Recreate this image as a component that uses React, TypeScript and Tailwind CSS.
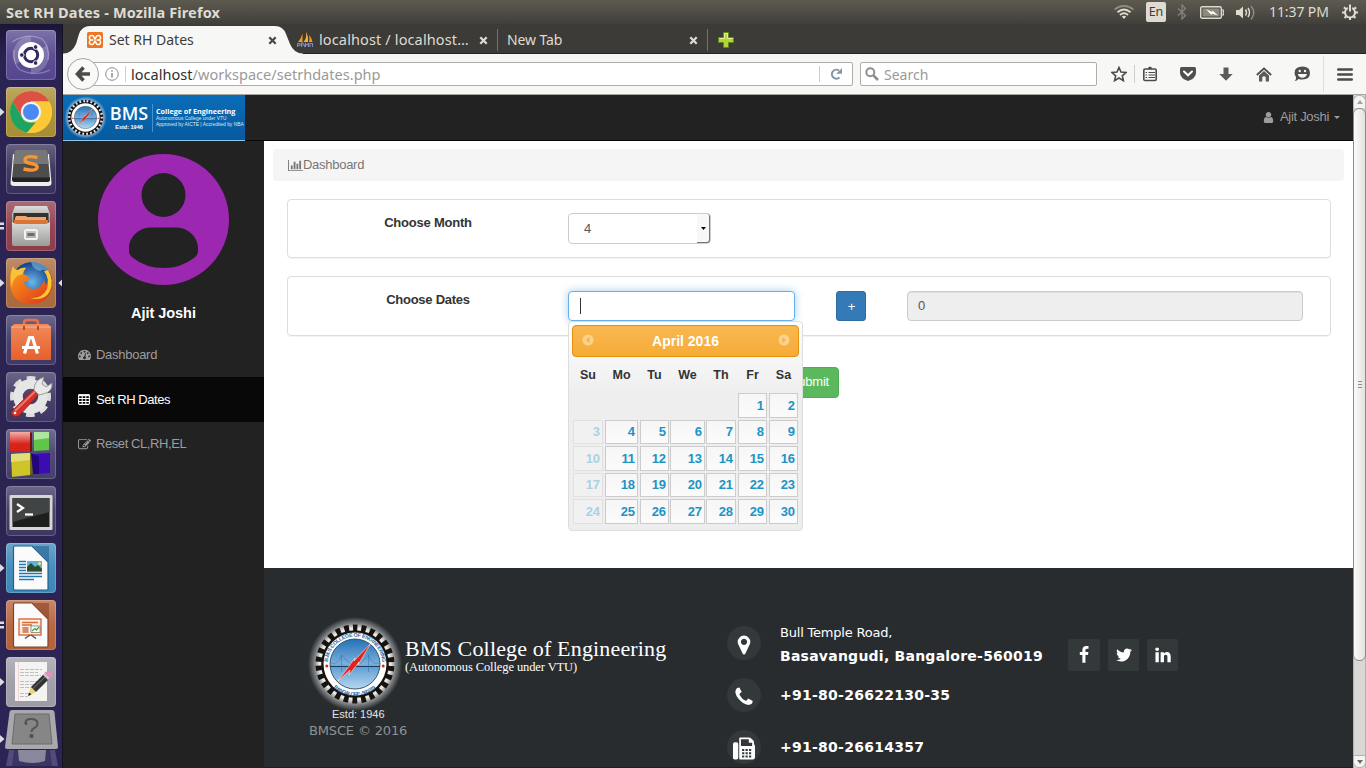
import React from "react";

const ubuntu = "font-['Noto_Sans',sans-serif]";
const arial = "font-['Liberation_Sans',sans-serif]";
const dejavu = "font-['DejaVu_Sans',sans-serif]";

/* ---------- shared drawings ---------- */

function Glyph({ d, className, box = "0 0 1792 1792" }: { d: string; className?: string; box?: string }) {
  return (
    <svg viewBox={box} className={className} fill="currentColor" fillRule="evenodd">
      <path d={d} />
    </svg>
  );
}

const MARKER =
  "M1152 640q0-106-75-181t-181-75-181 75-75 181 75 181 181 75 181-75 75-181zm256 0q0 109-33 179l-364 774q-16 33-47.5 52t-67.5 19-67.5-19-46.5-52l-365-774q-33-70-33-179 0-212 150-362t362-150 362 150 150 362z";
const PHONE =
  "M1600 1240q0 27-10 70.5t-21 68.5q-21 50-122 106-94 51-186 51-27 0-53-3.5t-57.5-12.5-47-14.5-55.5-20.5-49-18q-98-35-175-83-127-79-264-216t-216-264q-48-77-83-175-3-9-18-49t-20.5-55.5-14.5-47-12.5-57.5-3.5-53q0-92 51-186 56-101 106-122 25-11 68.5-21t70.5-10q14 0 21 3 18 6 53 76 11 19 30 54t35 63.5 31 53.5q3 4 17.5 25t21.5 35.5 7 28.5q0 20-28.5 50t-62 55-62 53-28.5 46q0 9 5 22.5t8.5 20.5 14 24 11.5 19q76 137 174 235t235 174q2 1 19 11.5t24 14 20.5 8.5 22.5 5q18 0 46-28.5t53-62 55-62 50-28.5q14 0 28.5 7t35.5 21.5 25 17.5q25 15 53.5 31t63.5 35 54 30q70 35 76 53 3 7 3 21z";
const FACEBOOK =
  "M1343 12v264h-157q-86 0-116 36t-30 108v189h293l-39 296h-254v759h-306v-759h-255v-296h255v-218q0-186 104-288.5t277-102.5q147 0 228 12z";
const TWITTER =
  "M1684 408q-67 98-162 167 1 14 1 42 0 130-38 259.5t-115.5 248.5-184.5 210.5-258 146-323 54.5q-271 0-496-145 35 4 78 4 225 0 401-138-105-2-188-64.5t-114-159.5q33 5 61 5 43 0 85-11-112-23-185.5-111.5t-73.5-205.5v-4q68 38 146 41-66-44-105-115t-39-154q0-88 44-163 121 149 294.5 238.5t371.5 99.5q-8-38-8-74 0-134 94.5-228.5t228.5-94.5q140 0 236 102 109-21 205-78-37 115-142 178 93-10 186-50z";
const LINKEDIN =
  "M477 625v991h-330v-991h330zm21-306q1 73-50.5 122t-135.5 49h-2q-82 0-132-49t-50-122q0-74 51.5-122.5t134.5-48.5 133 48.5 51 122.5zm1166 729v568h-329v-530q0-105-40.5-164.5t-126.5-59.5q-63 0-105.5 34.5t-63.5 85.5q-11 30-11 81v553h-329q2-399 2-647t-1-296l-1-48h329v144h-2q20-32 41-56t56.5-52 87-43.5 114.5-15.5q171 0 275 113.5t104 332.5z";
const USER =
  "M1536 1399q0 109-62.5 187t-150.5 78h-854q-88 0-150.5-78t-62.5-187q0-85 8.5-160.5t31.5-152 58.5-131 94-89 134.5-34.5q131 128 313 128t313-128q76 0 134.5 34.5t94 89 58.5 131 31.5 152 8.5 160.5zm-256-887q0 159-112.5 271.5t-271.5 112.5-271.5-112.5-112.5-271.5 112.5-271.5 271.5-112.5 271.5 112.5 112.5 271.5z";
const BARS =
  "M640 896v512h-256v-512h256zm384-512v1024h-256v-1024h256zm1024 1152v128h-2048v-1536h128v1408h1920zm-640-896v768h-256v-768h256zm384-384v1152h-256v-1152h256z";
const GAUGE =
  "M384 1152q0-53-37.5-90.5t-90.5-37.5-90.5 37.5-37.5 90.5 37.5 90.5 90.5 37.5 90.5-37.5 37.5-90.5zm192-448q0-53-37.5-90.5t-90.5-37.5-90.5 37.5-37.5 90.5 37.5 90.5 90.5 37.5 90.5-37.5 37.5-90.5zm428 481l101-382q6-26-7.5-48.5t-38.5-29.5-48 6.5-30 39.5l-101 382q-60 5-107 43.5t-63 98.5q-20 77 20 146t117 89 146-20 89-117q16-60-6-117t-72-91zm660-33q0-53-37.5-90.5t-90.5-37.5-90.5 37.5-37.5 90.5 37.5 90.5 90.5 37.5 90.5-37.5 37.5-90.5zm-640-640q0-53-37.5-90.5t-90.5-37.5-90.5 37.5-37.5 90.5 37.5 90.5 90.5 37.5 90.5-37.5 37.5-90.5zm448 192q0-53-37.5-90.5t-90.5-37.5-90.5 37.5-37.5 90.5 37.5 90.5 90.5 37.5 90.5-37.5 37.5-90.5zm320 448q0 261-141 483-19 29-54 29h-1402q-35 0-54-29-141-221-141-483 0-182 71-348t191-286 286-191 348-71 348 71 286 191 191 286 71 348z";
const EDIT =
  "M888 1184l116-116-152-152-116 116v56h96v96h56zm440-720q-16-16-33 1l-350 350q-17 17-1 33t33-1l350-350q17-17 1-33zm80 594v190q0 119-84.5 203.5t-203.5 84.5h-832q-119 0-203.5-84.5t-84.5-203.5v-832q0-119 84.5-203.5t203.5-84.5h832q63 0 117 25 15 7 18 23 3 17-9 29l-49 49q-14 14-32 8-23-6-45-6h-832q-66 0-113 47t-47 113v832q0 66 47 113t113 47h832q66 0 113-47t47-113v-126q0-13 9-22l64-64q15-15 35-7t20 29zm-96-738l288 288-672 672h-288v-288zm444 132l-92 92-288-288 92-92q28-28 68-28t68 28l152 152q28 28 28 68t-28 68z";

function Emblem({ className, id, tagged }: { className: string; id: string; tagged?: boolean }) {
  return (
    <svg viewBox="-50 -50 100 100" className={className}>
      <defs>
        <radialGradient id={id + "g"}>
          <stop offset="0.76" stopColor="#fff" stopOpacity="0.9" />
          <stop offset="0.86" stopColor="#fff" stopOpacity="0.42" />
          <stop offset="1" stopColor="#fff" stopOpacity="0" />
        </radialGradient>
        <linearGradient id={id + "s"} x1="0" y1="0" x2="0" y2="1">
          <stop offset="0" stopColor="#2272b4" />
          <stop offset="0.5" stopColor="#7bb0dd" />
          <stop offset="0.56" stopColor="#5f9fd4" />
          <stop offset="1" stopColor="#b7d8f0" />
        </linearGradient>
        <path id={id + "t"} d="M-27 4A27.300 27.300 0 1 1 27 4" />
        <path id={id + "b"} d="M-26.500 17.500A31.500 31.500 0 0 0 26.500 17.500" />
      </defs>
      <circle r="47" fill={`url(#${id}g)`} />
      <circle r="36" fill="none" stroke="#17130f" strokeWidth="7" strokeDasharray="4.800 3.900" strokeDashoffset="2.400" transform="rotate(-90)" />
      <circle r="33.800" fill="#17130f" />
      <circle r="31.500" fill="#fff" />
      <circle r="25" fill={`url(#${id}s)`} stroke="#30485a" strokeWidth="0.900" />
      <path d="M-25 2.500H25" stroke="#1d3c5c" strokeWidth="1.100" />
      <path d="M-24 -1Q-17 2 -13.500 -9Q-4 2 0 1.500Q4 2 13.500 -9Q17 2 24 -1M-13.500 -9V8M13.500 -9V8" stroke="#2c6aa3" strokeWidth="0.700" fill="none" opacity="0.600" />
      <path d="M16 -21L-1 -3L0 -6L-17 17L-5 6L-6 11L4 -2L3 1Z" fill="#e2231a" stroke="#fff" strokeWidth="0.500" />
      <circle cx="-28.200" cy="2" r="1.500" fill="#e2231a" />
      <circle cx="28.200" cy="2" r="1.500" fill="#e2231a" />
      {tagged && (
        <g className={arial} fontSize="5.400" fontWeight="700" fill="#1f6ca8">
          <text textLength="82">
            <textPath href={`#${id}t`} startOffset="6">B.M.S COLLEGE OF ENGINEERING</textPath>
          </text>
          <text textLength="46">
            <textPath href={`#${id}b`} startOffset="8">BANGALORE - 560 019</textPath>
          </text>
        </g>
      )}
    </svg>
  );
}

/* ---------- desktop panel ---------- */

function TopPanel() {
  return (
    <header className={`flex h-6 shrink-0 items-center bg-linear-to-b from-[#5d5b50] to-[#413f3a] pl-1.5 text-[#dfdbd2] ${ubuntu}`}>
      <span className="-mt-px text-[14.5px] leading-6 font-bold tracking-[0.14px]">Set RH Dates - Mozilla Firefox</span>
      <div className="ml-auto flex items-center">
        <svg viewBox="0 0 20 14" className="h-3.5 w-5" fill="none">
          <path d="M0.500 4.500Q10 -3 19.500 4.500" stroke="#8f8b82" strokeWidth="1.800" />
          <path d="M3.500 7.300Q10 1.800 16.500 7.300M6 10Q10 6.500 14 10" stroke="#dfdbd2" strokeWidth="1.800" />
          <path d="M7.800 11.500Q10 9.800 12.200 11.500L10 14Z" fill="#dfdbd2" />
        </svg>
        <span className="ml-3 flex h-5 w-5 items-center justify-center rounded-[2px] bg-[#dfdbd2] text-[12.5px] text-[#3c3b37]">En</span>
        <svg viewBox="0 0 10 16" className="ml-[11px] h-4 w-2.5" fill="none" stroke="#85827a" strokeWidth="1.300">
          <path d="M1 4.500L8.500 11.500L5 15V1L8.500 4.500L1 11.500" />
        </svg>
        <svg viewBox="0 0 24 13" className="ml-[13px] h-[13px] w-6">
          <rect x="0.700" y="0.700" width="20.600" height="11.600" rx="1.500" fill="none" stroke="#dfdbd2" strokeWidth="1.400" />
          <rect x="2.500" y="2.500" width="17" height="8" fill="#8c897f" />
          <path d="M22 4h1.300v5H22" fill="none" stroke="#dfdbd2" strokeWidth="1.200" />
          <path d="M6 3.200L12.500 6L12.200 4.200L18 9.500L11.500 7.500L11.700 9.300Z" fill="#fff" />
        </svg>
        <svg viewBox="0 0 20 17" className="ml-3 h-[17px] w-5" fill="none">
          <path d="M0 6h3l4-3.500v12L3 11H0z" fill="#dfdbd2" />
          <path d="M9.500 5.500Q11.500 8.500 9.500 11.500M12 4Q15 8.500 12 13" stroke="#dfdbd2" strokeWidth="1.500" />
          <path d="M15 2Q20.500 8.500 15 15.500" stroke="#8f8b82" strokeWidth="1.500" />
        </svg>
        <span className="ml-[13px] w-[61px] text-[14px] leading-6 tracking-[-0.1px] whitespace-nowrap">11:37 PM</span>
        <svg viewBox="0 0 16 16" className="mr-2 ml-3 h-4 w-4" fill="none" stroke="#dfdbd2">
          <path d="M5.800 4A5 5 0 1 0 10.200 4" strokeWidth="2" />
          <path d="M8 0.500v7" strokeWidth="2" />
          <path d="M0 8.500h3M13 8.500h3M8 13v3M1.800 3.300l2.200 1.500M14.200 3.300l-2.200 1.500M2.500 14l2-2M13.500 14l-2-2" strokeWidth="2" />
        </svg>
      </div>
    </header>
  );
}

/* ---------- launcher ---------- */

function Tile({ fill, children }: { fill: string; children?: React.ReactNode }) {
  return (
    <svg viewBox="0 0 50 50" className="h-[50px] w-[50px] shrink-0">
      <rect width="50" height="50" rx="4" fill={fill} />
      <rect width="50" height="50" rx="4" fill="url(#tileShine)" />
      <rect x="0.500" y="0.500" width="49" height="49" rx="3.500" fill="none" stroke="#fff" strokeOpacity="0.200" />
      {children}
    </svg>
  );
}

function LauncherDefs() {
  return (
    <svg className="absolute h-0 w-0">
      <defs>
        <linearGradient id="tileShine" x1="0" y1="0" x2="0" y2="1">
          <stop offset="0" stopColor="#fff" stopOpacity="0.240" />
          <stop offset="0.500" stopColor="#fff" stopOpacity="0.050" />
          <stop offset="1" stopColor="#fff" stopOpacity="0" />
        </linearGradient>
        <linearGradient id="metal" x1="0" y1="0" x2="0" y2="1">
          <stop offset="0" stopColor="#dededc" />
          <stop offset="1" stopColor="#9b9b99" />
        </linearGradient>
        <linearGradient id="orangeBag" x1="0" y1="0" x2="0" y2="1">
          <stop offset="0" stopColor="#f08a5c" />
          <stop offset="1" stopColor="#e8602a" />
        </linearGradient>
        <linearGradient id="fox" x1="0" y1="0" x2="1" y2="1">
          <stop offset="0" stopColor="#f9a51b" />
          <stop offset="0.500" stopColor="#ee6a1c" />
          <stop offset="1" stopColor="#d5311b" />
        </linearGradient>
        <linearGradient id="redCube" x1="0" y1="0" x2="0" y2="1">
          <stop offset="0" stopColor="#f6b0a6" />
          <stop offset="0.600" stopColor="#d8231b" />
        </linearGradient>
        <radialGradient id="globe">
          <stop offset="0" stopColor="#6ab7ea" />
          <stop offset="1" stopColor="#143f86" />
        </radialGradient>
      </defs>
    </svg>
  );
}

const DashIcon = () => (
  <Tile fill="#55468f">
    <g fill="none" stroke="#fff">
      <path d="M12 33A16 16 0 0 1 25 9M38 17A16 16 0 0 1 25 41" strokeOpacity="0.200" strokeWidth="6" />
      <path d="M6 12Q22 2 36 9Q44 16 42 30M44 40Q30 47 14 40Q7 34 8 20" strokeOpacity="0.300" strokeWidth="1.200" />
    </g>
    <circle cx="25" cy="25" r="13" fill="#fff" />
    <circle cx="25" cy="25" r="6.700" fill="none" stroke="#33285f" strokeWidth="3" />
    <circle cx="15.800" cy="25" r="2.300" fill="#33285f" stroke="#fff" strokeWidth="0.900" />
    <circle cx="29.600" cy="17" r="2.300" fill="#33285f" stroke="#fff" strokeWidth="0.900" />
    <circle cx="29.600" cy="33" r="2.300" fill="#33285f" stroke="#fff" strokeWidth="0.900" />
  </Tile>
);

const ChromeIcon = () => (
  <Tile fill="#a88d33">
    <circle cx="25" cy="25" r="21" fill="#fcc934" />
    <path d="M6.800 14.500A21 21 0 0 1 43.200 14.500H25L15.900 30.200Z" fill="#dd5144" />
    <path d="M6.800 14.500L15.900 30.200Q19 36 25 35.500H31L21 45.700A21 21 0 0 1 6.800 14.500Z" fill="#1da462" />
    <path d="M34.100 30.200L21 45.700A21 21 0 0 0 43.200 14.500H25Z" fill="#fcc934" />
    <circle cx="25" cy="25" r="10.200" fill="#f4f4f4" />
    <circle cx="25" cy="25" r="8" fill="#4a89f0" />
  </Tile>
);

const SublimeIcon = () => (
  <Tile fill="#37315a">
    <path d="M7 10L4.500 39Q4.500 42 8 42H42Q45.500 42 45.500 39L43 10Z" fill="#ededed" />
    <path d="M8.500 8Q8.500 6 10.500 6H39.500Q41.500 6 41.500 8L44 35Q44 38 41 38H9Q6 38 6 35Z" fill="#4d4d4d" />
    <path d="M8.500 8Q8.500 6 10.500 6H39.500Q41.500 6 41.500 8L42.500 20H7.500Z" fill="#777" />
    <path d="M6 33.500H44V35Q44 38 41 38H9Q6 38 6 35Z" fill="#222" />
    <path d="M31.500 13.500Q20 11 19 15.500Q18.500 18.500 25 19.500Q32 20.500 31 24Q29 27.500 17.500 25" fill="none" stroke="#f79433" strokeWidth="3.400" />
  </Tile>
);

const FilesIcon = () => (
  <Tile fill="#8f3c4a">
    <path d="M9 5H41L44 13V20H6V13Z" fill="url(#metal)" />
    <path d="M7.500 12H42.500V22H7.500Z" fill="#34302c" />
    <path d="M9 17L10 15H20L21 16H40V22H9Z" fill="#f3a36b" />
    <path d="M8 19H42V23H8Z" fill="#d97535" />
    <path d="M6 20Q8 23 10 23H40Q42 23 44 20V43Q44 45 42 45H8Q6 45 6 43Z" fill="url(#metal)" />
    <rect x="19" y="29" width="12" height="9" rx="1.500" fill="none" stroke="#f3f3f3" strokeWidth="2" />
    <rect x="21.500" y="32" width="7" height="3" fill="#6d6d6d" />
  </Tile>
);

const FirefoxIcon = () => (
  <Tile fill="#a96a3c">
    <circle cx="26" cy="24" r="20" fill="url(#globe)" />
    <path d="M25 4Q38 3 43 14Q38 10 34 13Q27 12 25 4Z" fill="#8fd0f0" opacity="0.500" />
    <path d="M7 8Q8 12 12 12Q16 9 20 10Q17 13 17 16Q21 17 24 20Q22 23 18 24Q20 32 29 31Q36 29 38 22Q40 26 39 28Q44 21 42 12Q48 22 46 31Q41 46 25 46Q6 45 4 27Q3 15 7 8Z" fill="url(#fox)" />
    <path d="M38 13Q44 21 41 31Q36 41 24 40Q38 44 44 33Q48 22 42 12Z" fill="#fbc62f" />
    <path d="M7 8Q8 12 12 12Q16 9 20 10Q17 13 17 16L11 18Q5 24 6 31Q3 19 7 8Z" fill="#f9c23c" />
  </Tile>
);

const SoftwareIcon = () => (
  <Tile fill="#3f3965">
    <path d="M18 14V8Q18 5 21 5H29Q32 5 32 8V14" fill="none" stroke="#e9714a" strokeWidth="2.600" />
    <path d="M5 12L8 9H42L45 12V45H5Z" fill="url(#orangeBag)" />
    <path d="M5 12H45" stroke="#f8b293" strokeWidth="1.200" />
    <path d="M18 15V11M32 15V11" stroke="#b74b20" strokeWidth="2" />
    <g fill="none" stroke="#fff" strokeWidth="3.200">
      <path d="M18.500 38.500L23.500 22.500H26.500L31.500 38.500" />
      <path d="M16 32.500H34" strokeWidth="3" />
    </g>
  </Tile>
);

const SettingsIcon = () => (
  <Tile fill="#3d3763">
    <g transform="translate(24.500 24.500)">
      <circle r="17" fill="none" stroke="#dedede" strokeWidth="7" strokeDasharray="8 5.350" strokeDashoffset="4" />
      <circle r="12.500" fill="none" stroke="#e6e6e6" strokeWidth="9.500" />
    </g>
    <path d="M6 39L28 17L33 22L13 44Q9 46 6 43Q4 41 6 39Z" fill="#d3302a" stroke="#8f1613" strokeWidth="0.600" />
    <path d="M9 39L29 19.500" stroke="#f0776f" strokeWidth="1.800" />
    <path d="M28 18Q28 8 38 5L36 12L40 15L46 11Q47 20 37 22L33 23Z" fill="#e9e9e9" stroke="#8d8d8d" strokeWidth="0.800" />
    <circle cx="9" cy="41" r="1.300" fill="#fff" />
  </Tile>
);

const BlocksIcon = () => (
  <Tile fill="#45406b">
    <path d="M4 3H24V23L4 22Z" fill="url(#redCube)" />
    <path d="M24 3L26 4V22L24 23Z" fill="#6e120e" />
    <path d="M28 3H43V21L28 22Z" fill="#5fc64a" />
    <path d="M28 3H43V9L28 11Z" fill="#aee69f" />
    <path d="M5 25L24 24V46L6 48Z" fill="#cfc52a" />
    <path d="M5 25L24 24V31L5 33Z" fill="#e4dd77" />
    <path d="M24 24L27 26V44L24 46Z" fill="#6f6a12" />
    <path d="M27 25L44 24V44L27 45Z" fill="#3a0db4" />
    <path d="M25 24L33 28V45L27 45Z" fill="#23077a" />
  </Tile>
);

const TerminalIcon = () => (
  <Tile fill="#3d3763">
    <rect x="3.500" y="9" width="43" height="35" rx="1" fill="#d6d6d3" />
    <rect x="6.500" y="12" width="37" height="29" fill="#1d1f1f" />
    <path d="M6.500 12H43.500V26L6.500 36Z" fill="#404444" />
    <g fill="none" stroke="#fff" strokeWidth="2.200">
      <path d="M11 18L17 22L11 26" />
      <path d="M19 28.500H27" />
    </g>
  </Tile>
);

function Doc({ fill, fold, children }: { fill: string; fold: string; children: React.ReactNode }) {
  return (
    <Tile fill={fill}>
      <path d="M27 3H43V19Z" fill={fold} opacity="0.600" />
      <path d="M9 3H26L42 19V46Q42 47 41 47H9Q7.500 47 7.500 46V4.500Q7.500 3 9 3Z" fill="#fbfbfb" stroke={fold} strokeWidth="1.200" />
      {children}
    </Tile>
  );
}

const WriterIcon = () => (
  <Doc fill="#3d88b8" fold="#23628f">
    <path d="M13 18.500H20M13 21.500H20M13 24.500H20M13 27.500H20M13 30.500H36M13 33.500H36M13 36.500H28" stroke="#2279b0" strokeWidth="1.500" />
    <rect x="21" y="18" width="15" height="10.500" fill="#57b3e2" />
    <path d="M21 28.500V24L25 20L29 24L32 22L36 26V28.500Z" fill="#2d4a2b" />
    <circle cx="33.500" cy="20.500" r="1.500" fill="#f7e24a" />
  </Doc>
);

const ImpressIcon = () => (
  <Doc fill="#b4623a" fold="#8a4020">
    <rect x="13" y="19" width="22" height="16" fill="#fdeee6" stroke="#d96b38" strokeWidth="1.400" />
    <path d="M16 22.500H32M16 25H26" stroke="#d96b38" strokeWidth="1.400" />
    <path d="M16.500 28H22.500M16.500 30H22.500M16.500 32H22.500" stroke="#c56a45" strokeWidth="1.300" />
    <rect x="25" y="26" width="9" height="6.500" fill="#fff" stroke="#6a6a6a" strokeWidth="0.700" />
    <path d="M26 31L29 28.500L30.500 30L33 27" stroke="#3c9b3c" strokeWidth="1.200" fill="none" />
    <path d="M24 35L19 38.500M25 35L30 38.500" stroke="#555" strokeWidth="1.500" />
  </Doc>
);

const GeditIcon = () => (
  <Tile fill="#9e9ba6">
    <path d="M9 5H41V44H9Z" fill="#f3f3f1" />
    <path d="M12.500 5V44" stroke="#f3cccc" strokeWidth="0.800" />
    <path d="M14 12.500H36M14 15.500H32M14 18.500H35M14 24.500H34M14 27.500H30M14 30.500H31M14 36.500H24M14 39.500H22" stroke="#c0c0c0" strokeWidth="1.200" strokeDasharray="4 1" />
    <path d="M22 39L25 30L30 35Z" fill="#efd36d" />
    <path d="M25 30L37.500 17.500L42.500 22.500L30 35Z" fill="#333" />
    <path d="M27 31.500L39.500 19.500" stroke="#777" strokeWidth="1" />
    <path d="M37 18L40 15.500L44.500 20L42 23Z" fill="#c9c9c9" />
    <path d="M40 16Q44 14 45 17Q45.500 19 44 20Z" fill="#e58fc0" stroke="#e58fc0" strokeWidth="2" />
    <path d="M22 39L23.200 35.500L25.500 37.500Z" fill="#222" />
  </Tile>
);

const FoldedIcon = () => (
  <svg viewBox="0 0 54 57" className="-ml-px h-[57px] w-[54px] shrink-0">
    <path d="M4 40L1 56H53L50 40Z" fill="#514c79" />
    <path d="M9 40L7 56H47L45 40Z" fill="#3b3661" />
    <path d="M13 40H41L40 51Q28 55 14 51Z" fill="#8a889c" />
    <path d="M7 0H47Q49 0 49.500 2L53 37Q53 39 51 39H2Q0 39 0 37L4.500 2Q5 0 7 0Z" fill="#a9a8ad" />
    <path d="M10 4H44L47 34H7Z" fill="#868686" stroke="#6b6b6b" />
    <path d="M20.500 13.500Q20 9 26 9Q32.500 9 32.500 13.500Q32.500 16.500 28.500 18.500Q26.500 19.500 26.500 22" fill="none" stroke="#555" strokeWidth="2" />
    <circle cx="21" cy="13.500" r="1.500" fill="#555" />
    <circle cx="26.500" cy="26" r="2.200" fill="#555" />
  </svg>
);

type Mark = "none" | "one" | "two";
const launcher: { icon: () => React.ReactElement; mark: Mark; focus?: boolean }[] = [
  { icon: DashIcon, mark: "none" },
  { icon: ChromeIcon, mark: "one" },
  { icon: SublimeIcon, mark: "none" },
  { icon: FilesIcon, mark: "two" },
  { icon: FirefoxIcon, mark: "one", focus: true },
  { icon: SoftwareIcon, mark: "none" },
  { icon: SettingsIcon, mark: "none" },
  { icon: BlocksIcon, mark: "none" },
  { icon: TerminalIcon, mark: "none" },
  { icon: WriterIcon, mark: "one" },
  { icon: ImpressIcon, mark: "two" },
  { icon: GeditIcon, mark: "one" },
];

function Pip({ mark }: { mark: Mark }) {
  return (
    <svg viewBox="0 0 6 12" className="h-3 w-1.5 shrink-0" fill="#dcdce2">
      {mark === "one" && <path d="M0 2L4.500 6L0 10Z" />}
      {mark === "two" && <path d="M0 2.500H4V5H0ZM0 7H4V9.500H0Z" />}
    </svg>
  );
}

function Launcher() {
  return (
    <nav className="flex w-[63px] shrink-0 flex-col gap-[7px] overflow-hidden border-r border-[#15131f] bg-linear-to-b from-[#1b1638] via-[#2b2453] via-5% to-[#2c2454] pt-1.5">
      <LauncherDefs />
      {launcher.map(({ icon: Icon, mark, focus }, i) => (
        <div key={i} className="flex shrink-0 items-center">
          <Pip mark={mark} />
          <Icon />
          {focus && (
            <svg viewBox="0 0 5 10" className="ml-0.5 h-2.5 w-1 shrink-0" fill="#dcdce2">
              <path d="M5 0.500L0.500 5L5 9.500Z" />
            </svg>
          )}
        </div>
      ))}
      <div className="-mt-1 flex shrink-0 items-center">
        <Pip mark="one" />
        <FoldedIcon />
      </div>
    </nav>
  );
}

/* ---------- browser chrome ---------- */

function Cross({ className, color }: { className: string; color: string }) {
  return (
    <svg viewBox="0 0 9 9" className={`h-[9px] w-[9px] shrink-0 ${className}`}>
      <path d="M1.300 1.300L7.700 7.700M7.700 1.300L1.300 7.700" stroke={color} strokeWidth="2.300" />
    </svg>
  );
}

function TabStrip() {
  return (
    <div className={`relative flex h-[30px] shrink-0 items-center bg-[#3c3b37] pt-0.5 text-[#dfdbd2] ${ubuntu}`}>
      <svg viewBox="0 0 1303 30" className="absolute inset-0 h-[30px] w-[1303px]">
        <path d="M0 29.500H1303" stroke="#26251f" />
        <path d="M0 30V29.500Q9 29.500 13 20L16 10Q19 2 27 2H212Q220 2 223 10L227 20Q231 29.500 240 29.500V30Z" fill="#f7f7f5" />
      </svg>
      <div className="relative flex w-[225px] items-center pl-6">
        <svg viewBox="0 0 16 16" className="h-4 w-4">
          <rect width="16" height="16" rx="1.500" fill="#ee7623" />
          <path d="M6.500 8H5A2.300 2.300 0 1 1 7 5.500L8 7L9 5.500A2.300 2.300 0 1 1 11 8A2.300 2.300 0 1 1 9 10.500L8 9L7 10.500A2.300 2.300 0 1 1 5 8M9.500 8H11" fill="none" stroke="#fff" strokeWidth="1.500" />
        </svg>
        <span className="-mt-px ml-1.5 text-[14px] whitespace-nowrap text-[#3c3c3c]">Set RH Dates</span>
        <Cross className="mr-[11px] ml-auto" color="#4a4a48" />
      </div>
      <div className="relative flex w-[210px] items-center pl-[9px]">
        <svg viewBox="0 0 16 16" className="h-4 w-4">
          <path d="M5.500 1.500V10H1Q4.500 6 5.500 1.500Z" fill="#f89c0e" />
          <path d="M9 0Q10 6 6.500 10H11Q11.500 4 9 0Z" fill="#f6ae3b" />
          <path d="M12 3Q13 7 12 10H15.500Q15 6 12 3Z" fill="#f89c0e" />
          <path d="M0.500 15V11.500H3V13.500H0.500M4.500 15V11H6V13H7.500V15M8.500 15V11.500L10 13L11.500 11.500V15M13 15V11.500H15.500V15" fill="none" stroke="#8587b8" strokeWidth="1.100" />
        </svg>
        <span className="-mt-px ml-1.5 text-[14.5px] tracking-[0.13px] whitespace-nowrap">localhost / localhost…</span>
        <Cross className="mr-2.5 ml-auto" color="#dfdbd2" />
      </div>
      <div className="relative -ml-px flex h-[22px] w-[211px] items-center border-x border-[#73716b] pl-[9px]">
        <span className="-mt-px text-[14px] tracking-[-0.1px] whitespace-nowrap">New Tab</span>
        <Cross className="mr-[9px] ml-auto" color="#dfdbd2" />
      </div>
      <svg viewBox="0 0 16 16" className="relative ml-2.5 h-4 w-4">
        <path d="M5.500 0.500H10.500V5.500H15.500V10.500H10.500V15.500H5.500V10.500H0.500V5.500H5.500Z" fill="#b4d338" stroke="#5d8a1c" />
        <path d="M1.500 6.500H6.500V1.500H9.500V6.500H14.500" fill="none" stroke="#e6f29a" />
      </svg>
    </div>
  );
}

function Toolbar() {
  return (
    <div className={`flex h-[41px] shrink-0 items-center border-b border-[#a9a7a2] bg-[#f7f7f5] text-[#8a8a88] ${ubuntu}`}>
      <div className="relative z-10 ml-1 flex h-8 w-8 shrink-0 items-center justify-center rounded-full border border-[#a5a5a1] bg-[#f9f9f8]">
        <svg viewBox="0 0 16 16" className="h-4 w-4">
          <path d="M8.500 1.500L2.500 8L8.500 14.500M3 8H15" fill="none" stroke="#4b4b49" strokeWidth="3.600" />
        </svg>
      </div>
      <div className="-ml-3 flex h-6 w-[766px] shrink-0 items-center rounded-[2px] border border-[#aeaea8] bg-white pl-[17px]">
        <svg viewBox="0 0 14 14" className="h-3.5 w-3.5" fill="none" stroke="#8a8a88">
          <circle cx="7" cy="7" r="6.300" />
          <path d="M7 6V10.500M7 3.300V4.800" strokeWidth="1.500" />
        </svg>
        <span className="ml-1.5 h-4 w-px bg-[#cfcfcb]" />
        <span className="ml-[5px] text-[14.5px] leading-5 tracking-[0.03px] whitespace-nowrap text-[#9a9a98]">
          <span className="text-[#2e2e2e]">localhost</span>/workspace/setrhdates.php
        </span>
        <span className="ml-auto h-4 w-px bg-[#cfcfcb]" />
        <svg viewBox="0 0 12 12" className="mr-2.5 ml-2.5 h-3 w-3">
          <path d="M9.500 9.500A4.500 4.500 0 1 1 9 2.500" fill="none" stroke="#8796a5" strokeWidth="2.100" />
          <path d="M12 0V5.800H6.200Z" fill="#8796a5" />
        </svg>
      </div>
      <div className="ml-[7px] flex h-6 w-[237px] shrink-0 items-center rounded-[2px] border border-[#aeaea8] bg-white pl-1">
        <svg viewBox="0 0 14 14" className="h-3.5 w-3.5" fill="none" stroke="#8f8f8d">
          <circle cx="5.300" cy="5.300" r="4" strokeWidth="2" />
          <path d="M8.500 8.500L13 13" strokeWidth="2.600" />
        </svg>
        <span className="mt-px ml-[5px] text-[14px] leading-5 text-[#9a9a98]">Search</span>
      </div>
      <svg viewBox="0 0 16 16" className="ml-3.5 h-4 w-4 shrink-0" fill="none" stroke="#4b4b49" strokeWidth="1.600">
        <path d="M8 1.500L10 6L15 6.500L11.300 9.800L12.400 14.600L8 12L3.600 14.600L4.700 9.800L1 6.500L6 6Z" />
      </svg>
      <span className="ml-[7px] h-[18px] w-px bg-[#cfcfcb]" />
      <svg viewBox="0 0 14 16" className="ml-2 h-4 w-3.5 shrink-0">
        <path d="M5 2Q7 -1 9 2V3H5Z" fill="#4b4b49" />
        <rect x="0.800" y="3" width="12.400" height="11.500" rx="1.300" fill="#f7f7f5" stroke="#4b4b49" strokeWidth="1.600" />
        <path d="M2.500 6.500H4M2.500 9H4M2.500 11.500H4M5.500 6.500H12M5.500 9H12M5.500 11.500H12" stroke="#4b4b49" strokeWidth="1.200" />
      </svg>
      <svg viewBox="0 0 16 14" className="ml-[23px] h-3.5 w-4 shrink-0">
        <path d="M1.500 0H14.500Q16 0 16 1.500V6Q16 11 8 14Q0 11 0 6V1.500Q0 0 1.500 0Z" fill="#4f4f4d" />
        <path d="M4 4.500L8 8.300L12 4.500" fill="none" stroke="#fff" strokeWidth="2" strokeLinecap="round" />
      </svg>
      <svg viewBox="0 0 14 14" className="ml-[23px] h-3.5 w-3.5 shrink-0">
        <path d="M4.500 0.500H9.500V7H13.700L7 13.700L0.300 7H4.500Z" fill="#5b5b59" />
      </svg>
      <svg viewBox="0 0 16 15" className="ml-[23px] h-[15px] w-4 shrink-0">
        <path d="M0.800 8L8 1.500L15.200 8" fill="none" stroke="#4b4b49" strokeWidth="1.700" />
        <path d="M3 8.500L8 4L13 8.500V14.500H9.700V10Q8 8.300 6.300 10V14.500H3Z" fill="#5b5b59" />
      </svg>
      <svg viewBox="0 0 16 16" className="ml-[22px] h-4 w-4 shrink-0">
        <path d="M8.500 0.500Q16 0.500 16 7T8.500 13.500Q6 13.500 4.500 13Q3 15 0.800 15Q2.500 13 2 11Q0.500 9 0.500 7Q0.500 0.500 8.500 0.500Z" fill="#4f4f4d" />
        <path d="M3.800 8H13Q12 11.800 8.400 11.800T3.800 8Z" fill="#f7f7f5" />
        <circle cx="5.700" cy="5" r="1.200" fill="#f7f7f5" />
        <circle cx="11" cy="5" r="1.200" fill="#f7f7f5" />
      </svg>
      <span className="ml-[13px] h-9 w-px bg-[#dededb]" />
      <svg viewBox="0 0 16 13" className="ml-[13px] h-[13px] w-4 shrink-0">
        <path d="M1.300 1.500H14.700M1.300 6.500H14.700M1.300 11.500H14.700" stroke="#4b4b49" strokeWidth="2.600" strokeLinecap="round" />
      </svg>
    </div>
  );
}

function Scrollbar() {
  return (
    <div className="flex w-[13px] shrink-0 flex-col items-center border-x border-[#b3b1ad] bg-[#dad8d5]">
      <div className="flex h-[13px] w-[13px] shrink-0 items-center justify-center rounded-t-md border border-b-0 border-[#b3b1ad] bg-[#f4f4f3]">
        <svg viewBox="0 0 6 4" className="h-1 w-1.5" fill="#a5a3a0">
          <path d="M3 0L6 4H0Z" />
        </svg>
      </div>
      <div className="flex h-[553px] w-[13px] shrink-0 flex-col items-center justify-center gap-[2px] rounded-md border border-[#8d8b87] bg-linear-to-r from-[#fbfbfa] to-[#e3e2e0]">
        <span className="h-px w-1 bg-[#8f8d89]" />
        <span className="h-px w-1 bg-[#8f8d89]" />
        <span className="h-px w-1 bg-[#8f8d89]" />
      </div>
      <div className="mt-auto flex h-[13px] w-[13px] shrink-0 items-center justify-center rounded-b-md border border-[#b3b1ad] bg-[#f4f4f3]">
        <svg viewBox="0 0 6 4" className="h-1 w-1.5" fill="#6f6d6a">
          <path d="M3 4L6 0H0Z" />
        </svg>
      </div>
    </div>
  );
}

/* ---------- page ---------- */

function Navbar() {
  return (
    <div className="flex h-[46px] shrink-0 border-b border-[#080808] bg-[#222]">
      <div className="-mb-px flex h-[46px] w-[182px] items-center border-b border-[#8cc4ea] bg-linear-to-b from-[#0a6db8] to-[#075a9f] text-white">
        <Emblem id="nav" className="h-[45px] w-[45px] shrink-0" />
        <div className="ml-0.5 flex w-[38px] flex-col items-center">
          <span className="font-['Open_Sans',sans-serif] text-[18px] leading-[18px] font-semibold">BMS</span>
          <span className="mt-[2px] font-['Liberation_Sans',sans-serif] text-[5.5px] leading-[7px] font-bold">Estd: 1946</span>
        </div>
        <span className="ml-[4px] h-7 w-px bg-[#4b91c9]" />
        <div className="ml-[3px] flex flex-col whitespace-nowrap">
          <span className="font-['Open_Sans',sans-serif] text-[7.2px] leading-[8px] font-bold">College of Engineering</span>
          <span className="mt-px font-['Liberation_Sans',sans-serif] text-[4.9px] leading-[6px] text-[#dbeaf6]">Autonomous College under VTU</span>
          <span className="font-['Liberation_Sans',sans-serif] text-[4.9px] leading-[6px] text-[#dbeaf6]">Approved by AICTE | Accredited by NBA</span>
        </div>
      </div>
      <div className={`mr-[13px] ml-auto flex h-[44px] items-center text-[13px] text-[#9d9d9d] ${arial}`}>
        <Glyph d={USER} className="mr-[5px] h-[13px] w-[13px]" />
        <span className="tracking-[-0.3px]">Ajit Joshi</span>
        <svg viewBox="0 0 6 3" className="ml-[5px] h-[3px] w-1.5" fill="#9d9d9d">
          <path d="M0 0H6L3 3Z" />
        </svg>
      </div>
    </div>
  );
}

function Sidebar() {
  return (
    <aside className={`flex w-[201px] shrink-0 flex-col bg-[#222] text-[13px] text-[#9d9d9d] ${arial}`}>
      <svg viewBox="0 0 131 131" className="mt-[13px] ml-[35px] h-[131px] w-[131px]">
        <circle cx="65.500" cy="65.500" r="65.500" fill="#9c27b0" />
        <circle cx="65.500" cy="41" r="22" fill="#222" />
        <path d="M52 73.500H79C92 74 100 85 100 94V97Q100 101 96 104Q83 114 65.500 114T35 104Q31 101 31 97V94C31 85 39 74 52 73.500Z" fill="#222" />
      </svg>
      <span className="mt-[18px] text-center text-[14.5px] leading-5 font-bold tracking-[-0.05px] text-white">Ajit Joshi</span>
      <div className="mt-[9px] flex h-[45px] items-center pl-[15px]">
        <Glyph d={GAUGE} className="h-[13px] w-[13px]" />
        <span className="ml-[5px] tracking-[-0.28px]">Dashboard</span>
      </div>
      <div className="flex h-[45px] items-center bg-[#080808] pl-[15px] text-white">
        <svg viewBox="0 0 12 11" className="h-[11px] w-3" fill="none" stroke="#fff">
          <rect x="0.600" y="1" width="10.800" height="9.400" rx="0.800" strokeWidth="1.100" />
          <path d="M0.500 1.200H11.500" strokeWidth="2" />
          <path d="M4.200 1V10M7.800 1V10M0.500 4.500H11.500M0.500 7.500H11.500" />
        </svg>
        <span className="ml-1.5 tracking-[-0.45px]">Set RH Dates</span>
      </div>
      <div className="flex h-[44px] items-center pl-[15px]">
        <Glyph d={EDIT} className="h-[13px] w-[13px]" />
        <span className="ml-[5px] tracking-[-0.42px]">Reset CL,RH,EL</span>
      </div>
    </aside>
  );
}

const cols = ["w-[30px]", "ml-0.5 w-[33px]", "ml-0.5 w-[29px]", "ml-px w-[35px]", "ml-px w-[30px]", "ml-0.5 w-[29px]", "ml-0.5 w-[29px]"];
const heights = ["h-[25px]", "h-[24px]", "h-[25px]", "h-[24px]", "h-[25px]"];
const weeks = [0, 1, 2, 3, 4].map((w) => [0, 1, 2, 3, 4, 5, 6].map((d) => w * 7 + d - 4));

function DatePicker() {
  return (
    <div className={`absolute top-full left-0 z-20 flex h-[210px] w-[235px] flex-col rounded-[4px] border border-[#ddd] bg-linear-to-b from-white via-[#eee] via-35% to-[#eee] p-[3px] ${arial}`}>
      <div className="flex h-8 shrink-0 items-center justify-between rounded-[4px] border border-[#e78f08] bg-linear-to-b from-[#f8b850] via-[#f7b043] via-60% to-[#f6ab33] px-[9px] text-[14px] font-bold text-white">
        <svg viewBox="0 0 12 12" className="-mt-0.5 h-3 w-3">
          <circle cx="6" cy="6" r="5.500" fill="#fbd28a" />
          <path d="M7.500 3V9L4 6Z" fill="#f7b04a" />
        </svg>
        <span className="-ml-px">April 2016</span>
        <svg viewBox="0 0 12 12" className="-mt-0.5 -mr-px h-3 w-3">
          <circle cx="6" cy="6" r="5.500" fill="#fbd28a" />
          <path d="M4.500 3V9L8 6Z" fill="#f7b04a" />
        </svg>
      </div>
      <div className="mt-[7px] ml-px flex h-[22px] items-center text-[12.5px] font-bold text-[#333]">
        {["Su", "Mo", "Tu", "We", "Th", "Fr", "Sa"].map((d, i) => (
          <span key={d} className={`text-center ${cols[i]}`}>{d}</span>
        ))}
      </div>
      <div className="mt-[7px] ml-px flex flex-col gap-0.5">
        {weeks.map((week, w) => (
          <div key={w} className={`flex shrink-0 ${heights[w]}`}>
            {week.map((day, i) => (
              <span
                key={i}
                className={`flex items-center justify-end text-[13px] font-bold tracking-[-0.1px] ${cols[i]} ${
                  day < 1
                    ? ""
                    : i === 0
                      ? "border border-[#e1e1e1] bg-[#f1f1f1] pr-0.5 text-[#a9d2e4]"
                      : "border border-[#ccc] bg-linear-to-b from-[#f6f6f6] to-[#fbfbfb] pr-0.5 text-[#1c94c4]"
                }`}
              >
                {day < 1 ? "" : day}
              </span>
            ))}
          </div>
        ))}
      </div>
    </div>
  );
}

function MainArea() {
  return (
    <main className={`flex h-[427px] shrink-0 flex-col bg-white pt-2 text-[13px] text-[#333] ${arial}`}>
      <div className="ml-[9px] flex h-8 w-[1071px] shrink-0 items-center rounded-[4px] bg-[#f5f5f5] pl-[15px] text-[#777]">
        <Glyph d={BARS} box="0 0 2048 1792" className="h-[13px] w-[15px]" />
        <span className="tracking-[-0.28px]">Dashboard</span>
      </div>
      <section className="mt-[18px] ml-[23px] flex h-[59px] w-[1044px] shrink-0 rounded-[4px] border border-[#ddd] pt-[13px] shadow-[0_1px_1px_rgba(0,0,0,0.05)]">
        <label className="h-5 w-[280px] text-center leading-[20px] font-bold tracking-[-0.22px]">Choose Month</label>
        <div className="flex h-[31px] w-[143px] rounded-[4px] border border-[#ccc] pl-[15px] leading-[29px] text-[#555]">
          4
          <span className="ml-auto flex w-[13px] items-center justify-center rounded-r-[3px] border-r border-b border-[#777] bg-[#f8f8f7]">
            <svg viewBox="0 0 5 3" className="h-[3px] w-[5px]"><path d="M0 0H5L2.500 3Z" /></svg>
          </span>
        </div>
      </section>
      <section className="mt-[18px] ml-[23px] flex h-[60px] w-[1044px] shrink-0 rounded-[4px] border border-[#ddd] pt-[14px] shadow-[0_1px_1px_rgba(0,0,0,0.05)]">
        <label className="h-5 w-[280px] text-center leading-[18px] font-bold tracking-[-0.25px]">Choose Dates</label>
        <div className="relative flex h-[30px] w-[227px] items-center rounded-[4px] border border-[#66afe9] bg-white pl-[11px] shadow-[0_0_8px_rgba(102,175,233,0.6)]">
          <span className="h-4 w-px bg-[#333]" />
          <div className="absolute top-[29px] -left-px">
            <DatePicker />
          </div>
        </div>
        <button className="ml-[41px] h-[30px] w-[30px] rounded-[3px] border border-[#2e6da4] bg-[#337ab7] pt-px pl-px text-white">+</button>
        <div className="ml-[41px] flex h-[30px] w-[396px] items-center rounded-[4px] border border-[#ccc] bg-[#eee] pl-2.5 text-[#555] shadow-[inset_0_1px_1px_rgba(0,0,0,0.075)]">0</div>
      </section>
      <button className="mt-[31px] ml-[511px] h-[31px] w-16 shrink-0 rounded-[4px] border border-[#4cae4c] bg-[#5cb85c] pr-[9px] pb-px text-right text-[13px] tracking-[-0.2px] text-white">Submit</button>
    </main>
  );
}

function FaxGlyph() {
  return (
    <svg viewBox="0 0 24 24" className="h-[23px] w-6" fill="#fff">
      <rect x="0.500" y="5.500" width="5.500" height="18" rx="1.800" />
      <path d="M7 1.500Q7 0.500 8 0.500H17Q18.500 0.500 19.500 1.500L21.500 3.500Q22.500 4.500 22.500 6V7.500Q23.500 8.200 23.500 10V21Q23.500 23.500 21 23.500H8Q7 23.500 7 22.500Z" />
      <path d="M8.800 2.300H17V6H20.500V9.500H8.800Z" fill="#33383b" />
      <path d="M10 12.500h2.300v2H10zM13.600 12.500h2.300v2h-2.300zM17.200 12.500h2.300v2h-2.300zM10 15.900h2.300v2H10zM13.600 15.900h2.300v2h-2.300zM17.200 15.900h2.300v2h-2.300zM10 19.300h2.300v2H10zM13.600 19.300h2.300v2h-2.300zM17.200 19.300h2.300v2h-2.300z" fill="#33383b" />
    </svg>
  );
}

function ContactRow({ icon, children }: { icon: React.ReactNode; children: React.ReactNode }) {
  return (
    <div className="flex h-[34px] items-center">
      <span className="flex h-[34px] w-[34px] shrink-0 items-center justify-center rounded-full bg-[#33383b] pt-[3px]">{icon}</span>
      <div className="ml-[19px] flex flex-col whitespace-nowrap">{children}</div>
    </div>
  );
}

function Footer() {
  return (
    <footer className={`flex flex-1 items-start overflow-hidden border-b border-[#1c1f21] bg-[#282c2f] text-white ${dejavu}`}>
      <div className="flex w-[463px] shrink-0 flex-col pt-[46px] pl-[41px]">
        <div className="flex">
          <Emblem id="foot" className="h-[100px] w-[100px] shrink-0" tagged />
          <div className="flex flex-col pt-[22px] font-['Liberation_Serif',serif] whitespace-nowrap">
            <span className="text-[22px] leading-[26px] tracking-[0.16px]">BMS College of Engineering</span>
            <span className="text-[12.5px] leading-[10px] tracking-[-0.1px]">(Autonomous College under VTU)</span>
          </div>
        </div>
        <span className="-mt-[7px] ml-[27px] font-['Liberation_Sans',sans-serif] text-[11px] leading-[15px] text-[#e4e4e4]">Estd: 1946</span>
        <span className="ml-1 text-[13px] leading-[18px] tracking-[-0.15px] text-[#8f9296]">BMSCE © 2016</span>
      </div>
      <div className="flex w-[341px] shrink-0 flex-col gap-[18px] pt-[58px]">
        <ContactRow icon={<Glyph d={MARKER} className="h-[22px] w-[22px]" />}>
          <span className="mt-[7px] text-[13px] leading-[18px] tracking-[-0.2px]">Bull Temple Road,</span>
          <span className="text-[14px] leading-[28px] font-bold tracking-[0.24px]">Basavangudi, Bangalore-560019</span>
        </ContactRow>
        <ContactRow icon={<Glyph d={PHONE} className="h-[22px] w-[22px]" />}>
          <span className="text-[14px] leading-5 font-bold tracking-[0.26px]">+91-80-26622130-35</span>
        </ContactRow>
        <ContactRow icon={<FaxGlyph />}>
          <span className="text-[14px] leading-5 font-bold tracking-[0.26px]">+91-80-26614357</span>
        </ContactRow>
      </div>
      <div className="flex gap-2 pt-[71px]">
        {[FACEBOOK, TWITTER, LINKEDIN].map((d, i) => (
          <span key={i} className={`flex h-8 items-center justify-center rounded-[2px] bg-[#33383b] ${i === 0 ? "w-8" : "w-[31px]"}`}>
            <Glyph d={d} className="h-[18px] w-[18px]" />
          </span>
        ))}
      </div>
    </footer>
  );
}

export default function App() {
  return (
    <div className="flex h-[768px] w-[1366px] flex-col overflow-hidden">
      <TopPanel />
      <div className="flex min-h-0 flex-1">
        <Launcher />
        <div className="flex w-[1303px] shrink-0 flex-col">
          <TabStrip />
          <Toolbar />
          <div className="flex min-h-0 flex-1">
            <div className="flex w-[1290px] flex-col">
              <Navbar />
              <div className="flex min-h-0 flex-1">
                <Sidebar />
                <div className="flex min-w-0 flex-1 flex-col">
                  <MainArea />
                  <Footer />
                </div>
              </div>
            </div>
            <Scrollbar />
          </div>
        </div>
      </div>
    </div>
  );
}
